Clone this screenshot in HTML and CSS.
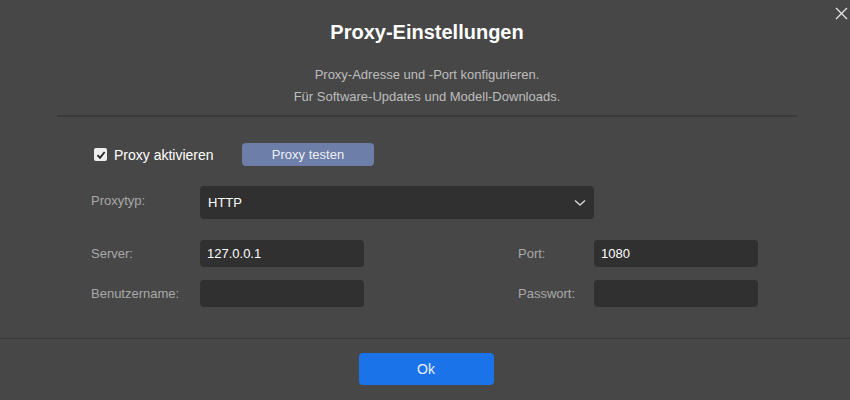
FILE: index.html
```html
<!DOCTYPE html>
<html lang="de">
<head>
    <meta charset="UTF-8">
    <title>Proxy-Einstellungen</title>
    <link rel="stylesheet" href="styles.css">
</head>
<body>
<div class="dialog">
    <button class="close-btn" aria-label="Schließen">
        <svg width="13" height="13" viewBox="0 0 13 13"><path d="M1 1 L12 12 M12 1 L1 12" stroke="#e6e6e6" stroke-width="1.3" fill="none"/></svg>
    </button>

    <div class="header">
        <h1>Proxy-Einstellungen</h1>
        <p class="subtitle">Proxy-Adresse und -Port konfigurieren.<br>Für Software-Updates und Modell-Downloads.</p>
    </div>

    <div class="content">
        <div class="toggle-row">
            <label class="check">
                <span class="box">
                    <svg width="10" height="10" viewBox="0 0 10 10"><path d="M1.5 5.2 L4 7.8 L8.6 2" stroke="#222" stroke-width="1.8" fill="none"/></svg>
                </span>
                Proxy aktivieren
            </label>
            <button class="test-btn">Proxy testen</button>
        </div>

        <div class="form-grid">
            <label class="field-label type-label">Proxytyp:</label>
            <div class="select">
                <span>HTTP</span>
                <svg width="12" height="8" viewBox="0 0 12 8"><path d="M1 1.5 L6 6 L11 1.5" stroke="#cfcfcf" stroke-width="1.6" fill="none"/></svg>
            </div>

            <label class="field-label first">Server:</label>
            <div class="input">127.0.0.1</div>
            <span></span>
            <label class="field-label">Port:</label>
            <div class="input">1080</div>

            <label class="field-label first">Benutzername:</label>
            <div class="input"></div>
            <span></span>
            <label class="field-label">Passwort:</label>
            <div class="input"></div>
        </div>
    </div>

    <div class="footer">
        <button class="ok-btn">Ok</button>
    </div>
</div>
</body>
</html>
```

FILE: styles.css
```css
body {
    margin: 0;
    background-color: #474747;
    font-family: "Liberation Sans", Arial, sans-serif;
    color: #ffffff;
}

.dialog {
    position: relative;
    width: 850px;
    height: 400px;
}

.close-btn {
    position: absolute;
    top: 7px;
    right: 2px;
    background: none;
    border: none;
    padding: 0;
    width: 13px;
    height: 13px;
}

.header {
    text-align: center;
    margin: 0 53px 0 57px;
    padding-top: 20px;
    padding-bottom: 7px;
    border-bottom: 2px solid #3a3a3a;
}

.header h1 {
    margin: 0;
    font-size: 20px;
    font-weight: bold;
    line-height: 24px;
}

.subtitle {
    margin: 20px 0 0 0;
    font-size: 13px;
    line-height: 22px;
    color: #bdbdbd;
}

.content {
    padding: 26px 0 0 91px;
    height: 221px;
    box-sizing: border-box;
}

.toggle-row {
    display: flex;
    align-items: center;
    height: 23px;
}

.check {
    display: flex;
    align-items: center;
    gap: 7px;
    font-size: 14px;
    width: 148px;
    margin-left: 3px;
}

.box {
    width: 13px;
    height: 13px;
    background: #eeeeee;
    border-radius: 2px;
    display: flex;
    align-items: center;
    justify-content: center;
}

.test-btn {
    width: 132px;
    height: 23px;
    background-color: #6d7ea9;
    color: #eef0f6;
    border: none;
    border-radius: 4px;
    font-family: inherit;
    font-size: 13px;
}

.form-grid {
    display: grid;
    grid-template-columns: 109px 164px 154px 76px 164px;
    grid-template-rows: 33px 48px 40px;
    margin-top: 20px;
    align-items: end;
}

.field-label {
    font-size: 13px;
    color: #a9a9a9;
    height: 27px;
    display: flex;
    align-items: center;
}

.field-label.first {
    grid-column: 1;
}

.field-label.type-label {
    align-self: start;
    height: 28px;
}

.select {
    grid-column: 2 / span 3;
    height: 33px;
    background-color: #303030;
    border-radius: 4px;
    display: flex;
    align-items: center;
    justify-content: space-between;
    padding: 0 8px;
    box-sizing: border-box;
    font-size: 13px;
}

.input {
    height: 27px;
    background-color: #303030;
    border-radius: 4px;
    padding: 0 7px;
    box-sizing: border-box;
    display: flex;
    align-items: center;
    font-size: 13px;
}

.footer {
    border-top: 1px solid #3a3a3a;
    padding-top: 14px;
    display: flex;
    justify-content: center;
    padding-left: 2px;
}

.ok-btn {
    width: 135px;
    height: 32px;
    background-color: #1a73e8;
    color: #e8f0ff;
    border: none;
    border-radius: 4px;
    font-family: inherit;
    font-size: 14px;
}
```
